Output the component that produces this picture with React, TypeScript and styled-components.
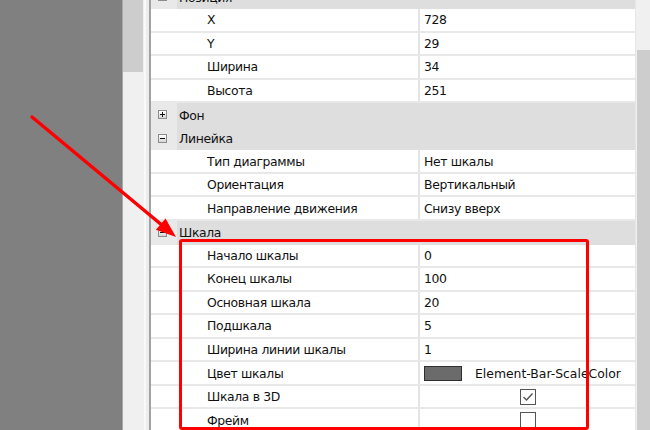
import React from "react";
import styled, { createGlobalStyle } from "styled-components";

const GlobalStyle = createGlobalStyle`
  html, body { margin: 0; padding: 0; }
  body {
    background: #808080;
    font-family: "DejaVu Sans", Verdana, sans-serif;
  }
`;

const Page = styled.div`
  position: relative;
  display: flex;
  width: 650px;
  height: 430px;
  overflow: hidden;
  background: #808080;
`;

const Backdrop = styled.div`
  flex: none;
  width: 122px;
  background: #808080;
`;

const ScrollBar = styled.div<{ $width: number }>`
  flex: none;
  width: ${(p) => p.$width}px;
  box-sizing: border-box;
  display: flex;
  flex-direction: column;
  background: #f0f0f0;
`;

const SideScroll = styled(ScrollBar)`
  border-left: 1px solid #a9a9a9;
  padding-right: 1px;
`;

const GridScroll = styled(ScrollBar)`
  border-left: 1px solid #e6e6e6;
  padding-left: 1px;
`;

const Track = styled.div<{ $size?: number }>`
  ${(p) => (p.$size ? `flex: none; height: ${p.$size}px;` : "flex: 1;")}
`;

const Thumb = styled.div<{ $size?: number }>`
  background: #cdcdcd;
  ${(p) => (p.$size ? `flex: none; height: ${p.$size}px;` : "flex: 1;")}
`;

const PanelEdge = styled.div`
  flex: none;
  width: 7px;
  box-sizing: border-box;
  background: #ececec;
  border-left: 2px solid #f9f9f9;
  border-right: 2px solid #a2a2a2;
`;

const Grid = styled.div`
  flex: 1;
  min-width: 0;
  overflow: hidden;
  background: #ffffff;
  font-size: 12.4px;
  letter-spacing: -0.35px;
  color: #111111;
`;

const Rows = styled.div`
  display: flex;
  flex-direction: column;
  margin-top: -14.5px;
`;

const CategoryRow = styled.div`
  display: grid;
  grid-template-columns: 26px 1fr;
  height: 23.55px;
  flex: none;
  background: #dedede;
`;

const MarginCell = styled.div<{ $category?: boolean }>`
  display: flex;
  align-items: center;
  padding-left: 7px;
  background: ${(p) => (p.$category ? "#e9e9e9" : "#ffffff")};
`;

const Expander = styled.div<{ $open: boolean }>`
  position: relative;
  width: 9px;
  height: 9px;
  box-sizing: border-box;
  border: 1px solid #8c8c8c;
  background: linear-gradient(#ffffff, #d6d6d6);
  margin-bottom: 1px;
  &::before {
    content: "";
    position: absolute;
    left: 1px;
    top: 3px;
    width: 5px;
    height: 1px;
    background: #111;
  }
  &::after {
    content: "";
    display: ${(p) => (p.$open ? "none" : "block")};
    position: absolute;
    left: 3px;
    top: 1px;
    width: 1px;
    height: 5px;
    background: #111;
  }
`;

const CategoryLabel = styled.div`
  display: flex;
  align-items: center;
  padding-left: 2px;
  white-space: nowrap;
`;

const PropRow = styled.div`
  display: grid;
  grid-template-columns: 26px 241px 1fr;
  height: 23.55px;
  flex: none;
  box-sizing: border-box;
  border-bottom: 2px solid #e8e8e8;
`;

const NameCell = styled.div`
  display: flex;
  align-items: center;
  padding-left: 30px;
  white-space: nowrap;
`;

const ValueCell = styled.div<{ $center?: boolean }>`
  display: flex;
  align-items: center;
  justify-content: ${(p) => (p.$center ? "center" : "flex-start")};
  padding-left: ${(p) => (p.$center ? "0" : "4px")};
  border-left: 2px solid #e4e4e4;
  white-space: nowrap;
`;

const Swatch = styled.span<{ $color: string }>`
  display: inline-block;
  width: 38px;
  height: 15px;
  box-sizing: border-box;
  border: 1px solid #2e2e2e;
  background: ${(p) => p.$color};
  margin-right: 13px;
`;

const ColorName = styled.span`
  letter-spacing: 0;
`;

const CheckBox = styled.span`
  display: inline-flex;
  align-items: center;
  justify-content: center;
  width: 16px;
  height: 16px;
  box-sizing: border-box;
  border: 1.5px solid #555555;
  background: #ffffff;
`;

const Highlight = styled.div`
  position: absolute;
  left: 179px;
  top: 239px;
  width: 410px;
  height: 191px;
  box-sizing: border-box;
  border: 3px solid #ff0000;
  border-radius: 3px;
  pointer-events: none;
`;

const Overlay = styled.svg`
  position: absolute;
  left: 0;
  top: 0;
  pointer-events: none;
`;

type Value =
  | { kind: "text"; text: string }
  | { kind: "color"; color: string; text: string }
  | { kind: "check"; checked: boolean };

type Item =
  | { type: "cat"; label: string; open: boolean }
  | { type: "prop"; name: string; value: Value };

const t = (text: string): Value => ({ kind: "text", text });

const items: Item[] = [
  { type: "cat", label: "Позиция", open: true },
  { type: "prop", name: "X", value: t("728") },
  { type: "prop", name: "Y", value: t("29") },
  { type: "prop", name: "Ширина", value: t("34") },
  { type: "prop", name: "Высота", value: t("251") },
  { type: "cat", label: "Фон", open: false },
  { type: "cat", label: "Линейка", open: true },
  { type: "prop", name: "Тип диаграммы", value: t("Нет шкалы") },
  { type: "prop", name: "Ориентация", value: t("Вертикальный") },
  { type: "prop", name: "Направление движения", value: t("Снизу вверх") },
  { type: "cat", label: "Шкала", open: true },
  { type: "prop", name: "Начало шкалы", value: t("0") },
  { type: "prop", name: "Конец шкалы", value: t("100") },
  { type: "prop", name: "Основная шкала", value: t("20") },
  { type: "prop", name: "Подшкала", value: t("5") },
  { type: "prop", name: "Ширина линии шкалы", value: t("1") },
  {
    type: "prop",
    name: "Цвет шкалы",
    value: { kind: "color", color: "#6b6b6b", text: "Element-Bar-ScaleColor" },
  },
  { type: "prop", name: "Шкала в 3D", value: { kind: "check", checked: true } },
  { type: "prop", name: "Фрейм", value: { kind: "check", checked: false } },
];

function renderValue(v: Value) {
  if (v.kind === "text") return <ValueCell>{v.text}</ValueCell>;
  if (v.kind === "color")
    return (
      <ValueCell>
        <Swatch $color={v.color} />
        <ColorName>{v.text}</ColorName>
      </ValueCell>
    );
  return (
    <ValueCell $center>
      <CheckBox>
        {v.checked && (
          <svg width="12" height="12" viewBox="0 0 12 12">
            <polyline
              points="1.5,6 4.5,9 10.5,2.5"
              fill="none"
              stroke="#555"
              strokeWidth="1.4"
            />
          </svg>
        )}
      </CheckBox>
    </ValueCell>
  );
}

export default function App() {
  return (
    <>
      <GlobalStyle />
      <Page>
        <Backdrop />
        <SideScroll $width={22}>
          <Thumb $size={72} />
          <Track />
        </SideScroll>
        <PanelEdge />
        <Grid>
          <Rows>
            {items.map((it, i) =>
              it.type === "cat" ? (
                <CategoryRow key={i}>
                  <MarginCell $category>
                    <Expander $open={it.open} />
                  </MarginCell>
                  <CategoryLabel>{it.label}</CategoryLabel>
                </CategoryRow>
              ) : (
                <PropRow key={i}>
                  <MarginCell />
                  <NameCell>{it.name}</NameCell>
                  {renderValue(it.value)}
                </PropRow>
              )
            )}
          </Rows>
        </Grid>
        <GridScroll $width={15}>
          <Track $size={50} />
          <Thumb />
        </GridScroll>
        <Highlight />
        <Overlay width="650" height="430" viewBox="0 0 650 430">
          <line
            x1="32"
            y1="117"
            x2="163"
            y2="226"
            stroke="#ff0000"
            strokeWidth="3.5"
            strokeLinecap="round"
          />
          <polygon points="176,237 155.9,229.8 165.5,218.4" fill="#ff0000" />
        </Overlay>
      </Page>
    </>
  );
}
